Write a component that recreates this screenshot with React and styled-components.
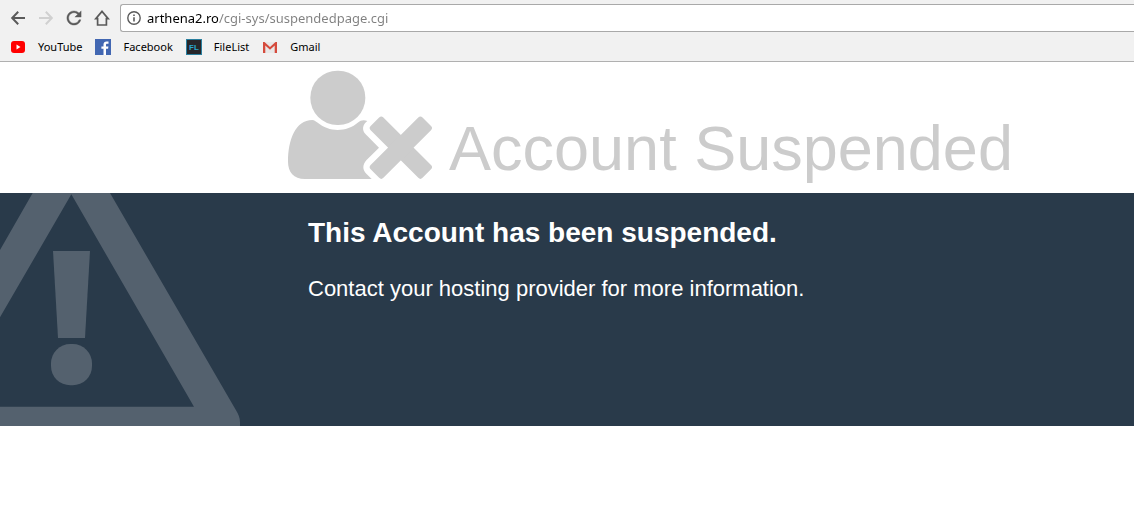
import React, { useState } from "react";
import styled, { createGlobalStyle } from "styled-components";

const GlobalStyle = createGlobalStyle`
  body {
    margin: 0;
    background-color: white;
    font-family: "Liberation Sans", Arial, sans-serif;
  }
`;

const Browser = styled.header`
  background-color: #f1f1f1;
  border-bottom: 1px solid #b0b0b0;
  font-family: "Noto Sans", "Segoe UI", sans-serif;
`;

const Toolbar = styled.div`
  display: flex;
  align-items: center;
  padding: 4px 0 0 4px;
`;

const NavButton = styled.button`
  display: flex;
  align-items: center;
  justify-content: center;
  width: 28px;
  height: 28px;
  padding: 0;
  border: none;
  background: none;
  color: #5a5a5a;

  &:disabled {
    color: #d0d0d0;
  }
`;

const Icon = styled.svg`
  display: block;
  flex: none;
  width: ${(props) => props.$size || 16}px;
  height: ${(props) => props.$size || 16}px;
`;

const AddressBar = styled.label`
  display: flex;
  flex: 1;
  align-items: center;
  gap: 6px;
  box-sizing: border-box;
  height: 28px;
  margin-left: 4px;
  padding-left: 6px;
  border: 1px solid #a9a9a9;
  border-right: none;
  border-radius: 3px 0 0 3px;
  background-color: white;
  color: #5a5a5a;
`;

// The host part is black and the path is gray
const AddressInput = styled.input`
  flex: 1;
  min-width: 0;
  padding: 0;
  border: none;
  outline: none;
  font-family: "Noto Sans", "Segoe UI", sans-serif;
  font-size: 13px;
  line-height: 18px;
  color: transparent;
  background-image: linear-gradient(to right, black 71px, #808080 71px);
  background-clip: text;
  -webkit-background-clip: text;
`;

const Bookmarks = styled.nav`
  display: flex;
  align-items: center;
  gap: 13px;
  height: 29px;
  padding-left: 10px;
`;

const Bookmark = styled.a`
  display: flex;
  align-items: center;
  gap: 12px;
  font-size: 11px;
  line-height: 16px;
  color: black;
  text-decoration: none;
`;

const Heading = styled.section`
  display: flex;
  align-items: flex-start;
  gap: 16px;
  padding: 8px 0 9px 288px;
  color: #cccccc;
`;

const UserIcon = styled.svg`
  flex: none;
  width: 145px;
  height: 109px;
`;

const Title = styled.h1`
  margin: 42px 0 0;
  font-size: 63px;
  font-weight: normal;
  line-height: 72px;
  white-space: nowrap;
`;

const Notice = styled.section`
  display: flex;
  gap: 68px;
  background-color: #293a4a;
  color: white;
`;

const WarningIcon = styled.svg`
  display: block;
  flex: none;
  width: 240px;
  height: 233px;
`;

const NoticeText = styled.div`
  padding-top: 24px;
`;

const NoticeTitle = styled.h2`
  margin: 0 0 27px;
  font-size: 28px;
  line-height: 32px;
`;

const NoticeBody = styled.p`
  margin: 0;
  font-size: 22px;
  line-height: 26px;
`;

const BOOKMARKS = [
  {
    title: "YouTube",
    icon: (
      <>
        <rect x="1" y="2" width="14" height="12" rx="3" fill="#ff0000" />
        <path d="M6.5 5.5v5L10.5 8z" fill="white" />
      </>
    ),
  },
  {
    title: "Facebook",
    icon: (
      <>
        <rect width="16" height="16" fill="#4267b2" />
        <path
          d="M11 16V9.8h2.1l.3-2.4H11V5.9c0-.7.2-1.2 1.2-1.2h1.3V2.5c-.2 0-1-.1-1.9-.1-1.9 0-3.1 1.1-3.1 3.2v1.8H6.4v2.4h2.1V16z"
          fill="white"
        />
      </>
    ),
  },
  {
    title: "FileList",
    icon: (
      <>
        <rect x=".5" y=".5" width="15" height="15" fill="#26262a" stroke="#2a7f9e" />
        <text
          x="3"
          y="11"
          fontSize="8"
          fontWeight="bold"
          fontFamily="Liberation Sans, sans-serif"
          fill="#2ba6d2"
        >
          FL
        </text>
      </>
    ),
  },
  {
    title: "Gmail",
    icon: (
      <>
        <path d="M2 3h12v11H2z" fill="#e8e8e8" />
        <path d="M1 14V3h1.5L8 8l5.5-5H15v11h-2.3V6.5L8 10.7 3.3 6.5V14z" fill="#d54b3d" />
      </>
    ),
  },
];

const App = () => {
  const [url, setUrl] = useState("arthena2.ro/cgi-sys/suspendedpage.cgi");

  return (
    <>
      <GlobalStyle />
      <Browser>
        <Toolbar>
          <NavButton aria-label="Back">
            <Icon viewBox="0 0 16 16" fill="none" stroke="currentColor" strokeWidth="2">
              <path d="M15 8H2.5M8.2 1.8L2.2 8l6 6.2" />
            </Icon>
          </NavButton>
          <NavButton aria-label="Forward" disabled>
            <Icon viewBox="0 0 16 16" fill="none" stroke="currentColor" strokeWidth="2">
              <path d="M1 8h12.5M7.8 1.8l6 6.2-6 6.2" />
            </Icon>
          </NavButton>
          <NavButton aria-label="Reload">
            <Icon viewBox="3 3 18 18" fill="currentColor">
              <path
                d="M17.65 6.35A7.96 7.96 0 0 0 12 4c-4.42 0-8 3.58-8 8s3.58 8 8 8c3.73 0 6.84-2.55 7.73-6h-2.08A5.99 5.99 0 0 1 12 18c-3.31 0-6-2.69-6-6s2.69-6 6-6c1.66 0 3.14.69 4.22 1.78L13 11h7V4z"
                stroke="currentColor"
                strokeWidth=".4"
              />
            </Icon>
          </NavButton>
          <NavButton aria-label="Home">
            <Icon viewBox="0 0 16 16" fill="none" stroke="currentColor" strokeWidth="1.7">
              <path d="M8 1.4L1.8 8.6H3.6V15H12.4V8.6H14.2z" />
            </Icon>
          </NavButton>
          <AddressBar>
            <Icon $size={14} viewBox="0 0 14 14" fill="none" stroke="currentColor">
              <circle cx="7" cy="7" r="6.2" strokeWidth="1.4" />
              <path d="M7 6.2v4.3M7 3.4v1.6" strokeWidth="1.6" />
            </Icon>
            <AddressInput
              aria-label="Address"
              value={url}
              spellCheck={false}
              onChange={(e) => setUrl(e.target.value)}
            />
          </AddressBar>
        </Toolbar>
        <Bookmarks>
          {BOOKMARKS.map((bookmark) => (
            <Bookmark key={bookmark.title} href="#">
              <Icon viewBox="0 0 16 16">{bookmark.icon}</Icon>
              {bookmark.title}
            </Bookmark>
          ))}
        </Bookmarks>
      </Browser>
      <main>
        <Heading>
          <UserIcon viewBox="53 30 435 327" fill="currentColor">
            <rect x="120" y="32" width="165" height="163" rx="81" />
            <path d="M104 357C70 357 53 335 53 305C53 240 75 180 126 180C132 180 135 183 140 187C160 203 180 210 202 210C224 210 246 203 264 187C270 181 280 178 291 183C276 194 274 211 286 223L326 263L288 301C276 314 276 330 288 341L304 357Z" />
            <g transform="translate(391.5 263)">
              <rect x="-110" y="-27" width="220" height="54" rx="9" transform="rotate(45)" />
              <rect x="-110" y="-27" width="220" height="54" rx="9" transform="rotate(-45)" />
            </g>
          </UserIcon>
          <Title>Account Suspended</Title>
        </Heading>
        <Notice>
          <WarningIcon viewBox="0 24 720 699" fill="#54616e">
            <path
              fillRule="evenodd"
              d="M98 24H330L708 676Q720 695 720 711V723H0V665H582L214 28L0 397V195Z"
            />
            <path d="M159 198H270L255 459H174Z" />
            <rect x="153" y="477" width="123" height="124" rx="58" />
          </WarningIcon>
          <NoticeText>
            <NoticeTitle>This Account has been suspended.</NoticeTitle>
            <NoticeBody>Contact your hosting provider for more information.</NoticeBody>
          </NoticeText>
        </Notice>
      </main>
    </>
  );
};

export default App;
